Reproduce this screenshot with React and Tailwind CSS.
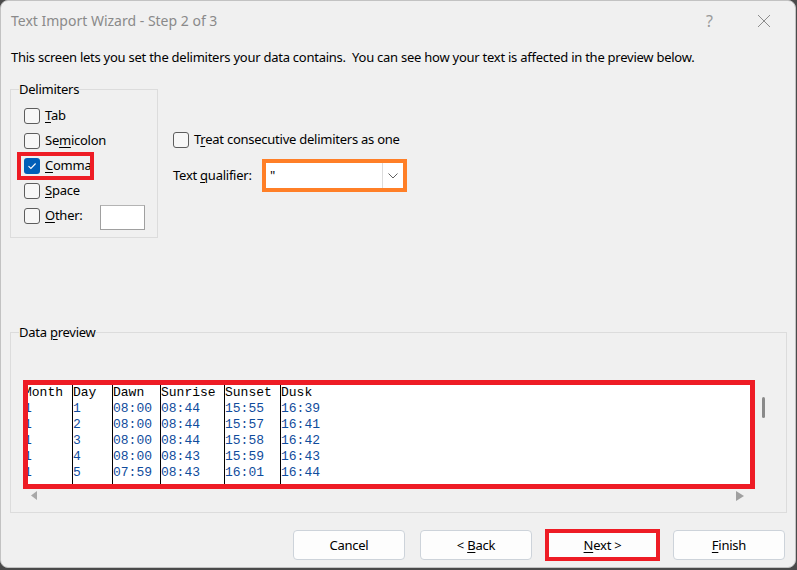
import React from 'react';

const FONT = { fontFamily: '"Noto Sans", "Liberation Sans", sans-serif' };

// --- Small pieces ---

const Key = ({ children }) => <u className="underline underline-offset-2 decoration-1">{children}</u>;

const CheckBox = ({ checked }) =>
  checked ? (
    <span className="w-[16px] h-[16px] rounded-[3px] bg-[#005fb8] flex items-center justify-center shrink-0">
      <svg width="10" height="8" viewBox="0 0 10 8" fill="none">
        <path d="M1.5 4.2 L3.9 6.5 L8.6 1.5" stroke="white" strokeWidth="1.1" />
      </svg>
    </span>
  ) : (
    <span className="w-[16px] h-[16px] rounded-[3px] border border-[#5d5d5d] bg-[#f7f7f7] shrink-0" />
  );

const CheckRow = ({ checked, children }) => (
  <div className="flex items-center gap-[5px] h-[25px]">
    <CheckBox checked={checked} />
    <span className="text-[13px] tracking-[-0.25px] leading-none text-black">{children}</span>
  </div>
);

const Button = ({ children, highlight }) => (
  <div className={highlight ? 'border-[4px] border-[#ee1c25] w-[115px] h-[32px] flex items-center justify-center bg-[#fdfdfd]' : 'w-[112px] h-[30px] rounded-[4px] border border-[#cdd3da] bg-[#fdfdfd] flex items-center justify-center'}>
    <span className="text-[13px] tracking-[-0.25px] text-black leading-none">{children}</span>
  </div>
);

const columns = [
  { w: 'w-[48px]', head: 'Month', vals: ['1', '1', '1', '1', '1'] },
  { w: 'w-[40px]', head: 'Day', vals: ['1', '2', '3', '4', '5'] },
  { w: 'w-[48px]', head: 'Dawn', vals: ['08:00', '08:00', '08:00', '08:00', '07:59'] },
  { w: 'w-[64px]', head: 'Sunrise', vals: ['08:44', '08:44', '08:44', '08:43', '08:43'] },
  { w: 'w-[56px]', head: 'Sunset', vals: ['15:55', '15:57', '15:58', '15:59', '16:01'] },
  { w: 'w-[120px]', head: 'Dusk', vals: ['16:39', '16:41', '16:42', '16:43', '16:44'] },
];

const Preview = () => (
  <div className="w-[732px] h-[109px] border-[5px] border-[#ee1c25] bg-white overflow-hidden flex shrink-0">
    {columns.map((c, i) => (
      <div
        key={c.head}
        className={`${c.w} h-full shrink-0 ${i === 0 ? '-ml-[4px]' : 'border-l border-black'}`}
        style={{ fontFamily: '"Liberation Mono", "Courier New", monospace' }}
      >
        <div className="text-[13px] leading-[16px] text-black whitespace-pre">{c.head}</div>
        {c.vals.map((v, j) => (
          <div key={j} className="text-[13px] leading-[16px] text-[#0f4c9c] whitespace-pre">{v}</div>
        ))}
      </div>
    ))}
  </div>
);

// --- Main ---

export default function App() {
  return (
    <div className="w-[797px] h-[570px] bg-[#4a4a4a]" style={FONT}>
      <div className="w-[796px] h-[568px] bg-[#f0f0f0] border border-[#c2c2c2] rounded-[8px] flex flex-col">
        {/* title bar */}
        <div className="h-[39px] flex items-center pl-[10px] pr-[20px]">
          <span className="text-[14px] text-[#8a8a8a] flex-1">Text Import Wizard - Step 2 of 3</span>
          <span className="text-[16px] text-[#9a9a9a] mr-[44px]">?</span>
          <svg width="14" height="14" viewBox="0 0 14 14" className="mr-[4px]">
            <path d="M1 1 L13 13 M13 1 L1 13" stroke="#8c8c8c" strokeWidth="1" />
          </svg>
        </div>

        <p className="text-[13px] tracking-[-0.25px] text-black pl-[10px] mt-[8px] leading-[18px]">
          This screen lets you set the delimiters your data contains.&nbsp; You can see how your text is affected in the preview below.
        </p>

        {/* delimiters + qualifier */}
        <div className="flex mt-[15px] pl-[9px]">
          <fieldset className="w-[148px] h-[157px] border border-[#dcdcdc]">
            <legend className="ml-[8px] text-[13px] tracking-[-0.25px] leading-[16px] text-black">Delimiters</legend>
            <div className="pl-[13px] pt-[6px]">
              <CheckRow><Key>T</Key>ab</CheckRow>
              <CheckRow>Se<Key>m</Key>icolon</CheckRow>
              <div className="relative">
                <div className="absolute -left-[7px] -top-[1px] w-[77px] h-[28px] border-[4px] border-[#ee1c25]" />
                <CheckRow checked><Key>C</Key>omma</CheckRow>
              </div>
              <CheckRow><Key>S</Key>pace</CheckRow>
              <div className="flex items-center h-[25px]">
                <CheckRow><Key>O</Key>ther:</CheckRow>
                <div className="ml-[17px] mt-[4px] w-[45px] h-[25px] bg-white border border-[#a0a0a0] border-t-[#b4b4b4]" />
              </div>
            </div>
          </fieldset>

          <div className="ml-[15px] pt-[46px]">
            <CheckRow>T<Key>r</Key>eat consecutive delimiters as one</CheckRow>
            <div className="flex items-center mt-[7px]">
              <span className="text-[13px] tracking-[-0.25px] text-black w-[89px]">Text <Key>q</Key>ualifier:</span>
              <div className="w-[145px] h-[33px] border-[4px] border-[#ff7f27] bg-white flex">
                <span className="flex-1 text-[13px] leading-[25px] pl-[4px] text-black">"</span>
                <div className="w-[21px] border-l border-[#dcdcdc] flex items-center justify-center">
                  <svg width="10" height="6" viewBox="0 0 10 6">
                    <path d="M0.5 0.5 L5 5 L9.5 0.5" stroke="#606060" strokeWidth="1" fill="none" />
                  </svg>
                </div>
              </div>
            </div>
          </div>
        </div>

        {/* data preview */}
        <fieldset className="ml-[9px] mt-[86px] w-[777px] h-[189px] border border-[#dcdcdc]">
          <legend className="ml-[8px] text-[13px] tracking-[-0.25px] leading-[16px] text-black">Data <Key>p</Key>review</legend>
          <div className="pl-[12px]">
            <div className="flex mt-[40px]">
              <Preview />
              <div className="ml-[7px] pt-[17px]">
                <div className="w-[3px] h-[21px] rounded-full bg-[#8a8a8a]" />
              </div>
            </div>
            <div className="flex items-start justify-between w-[713px] ml-[8px] mt-[2px]">
              <svg width="6" height="9" viewBox="0 0 6 9"><path d="M6 0 L0 4.5 L6 9 Z" fill="#a8a8a8" /></svg>
              <svg width="8" height="10" viewBox="0 0 8 10"><path d="M0 0 L8 5 L0 10 Z" fill="#a0a0a0" /></svg>
            </div>
          </div>
        </fieldset>

        {/* buttons */}
        <div className="flex items-center mt-[16px] pl-[292px] gap-[15px]">
          <Button>Cancel</Button>
          <Button>&lt; <Key>B</Key>ack</Button>
          <div className="-mx-[2px]">
            <Button highlight><Key>N</Key>ext &gt;</Button>
          </div>
          <Button><Key>F</Key>inish</Button>
        </div>
      </div>
    </div>
  );
}
